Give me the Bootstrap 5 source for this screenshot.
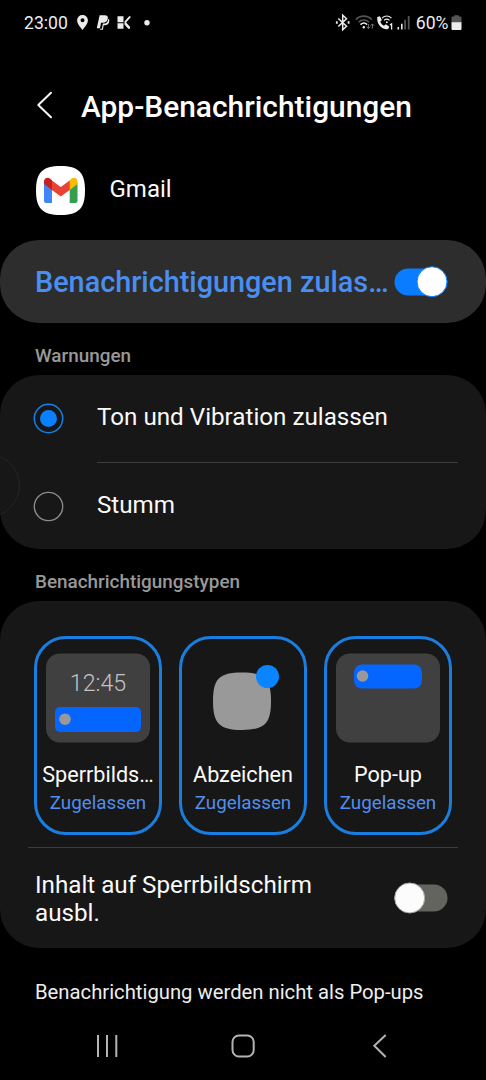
<!DOCTYPE html>
<html lang="de" data-bs-theme="dark">
<head>
<meta charset="utf-8">
<meta name="viewport" content="width=device-width, initial-scale=1">
<title>App-Benachrichtigungen</title>
<link href="https://cdn.jsdelivr.net/npm/bootstrap@5.3.0/dist/css/bootstrap.min.css" rel="stylesheet">
<style>
body{background:#000;color:#fafafa;font-family:Roboto,"Noto Sans",sans-serif;line-height:1.17;height:1080px;overflow:hidden}
svg{display:block;flex:none}
.statusbar{height:46px;padding:0 24px;font-size:17.6px;color:#ececec}
.status-icons{margin-right:3.5px}
.battery{margin-left:2.5px}
.page-head{height:120px;padding:0 36px}
.page-head h1{font-size:29.9px;font-weight:500;margin-left:27px;padding-top:2px}
.app-row{height:74px;padding:0 36px;font-size:24px}
.app-name{margin:9px 0 0 24.5px}
.panel{background:#171717;border-radius:39px}
.master{background:#2d2d2d;height:83px;padding:0 38px 0 35px}
.master-label{color:#4a8ff0;font-size:28.8px;font-weight:500;width:355px;padding-top:3px}
.section-label{height:52px;padding:22px 35px 0;font-size:18.9px;font-weight:500;color:#999}
.alerts{height:174px}
.option{font-size:24.2px;padding-left:33px;height:87px}
.option-text{margin-left:33px;padding-bottom:2px}
.rule{height:1px;background:#3d3d3d;margin-right:28px}
.option-rule{margin-left:97px}
.types-rule{margin-left:28px;margin-top:12px}
.tiles{padding:35px 34px 0;gap:17px}
.tile{width:128px;height:199px;border:3px solid #1a7ee0;border-radius:32px;padding-top:13.5px}
.tile-name{font-size:21.6px;margin-top:19.5px;width:114px}
.tile-state{font-size:18.8px;color:#528eec;margin-top:5px}
.hide-row{font-size:24.2px;height:100px;padding:0 38px 0 35px;line-height:28.5px}
.hide-text{padding-top:2px}
.note{font-size:20.25px;padding:33px 35px 0;height:64px;color:#eee}
.navkeys{height:68px}
.edge-handle{left:-43px;top:454px;width:63px;height:63px;border:1px solid #252525;border-radius:50%}
</style>
</head>
<body>
<header class="statusbar d-flex align-items-center justify-content-between">
  <div class="d-flex align-items-center">
    <span class="clock">23:00</span>
    <svg class="ms-2" width="78" height="20" viewBox="76 13 78 20" fill="#ececec">
      <path fill-rule="evenodd" d="M82.500 15a5.200 5.200 0 0 0-5.400 5.200c0 3.600 3.400 7 5.400 9.800 2-2.800 5.400-6.200 5.400-9.800A5.200 5.200 0 0 0 82.500 15zm0 3.200a2 2 0 1 1 0 4 2 2 0 0 1 0-4z"/>
      <path d="M99.600 15.300h5.200c2.700 0 3.500 1.600 2.900 3.700-.6 2.600-2.300 3.700-4.800 3.700h-1.900l-1 5.600h-3.200z"/>
      <path d="M108.400 18.600c1 .8 1.100 2 .7 3.300-.6 2.300-2.200 3.300-4.400 3.300h-1l-.8 4.600h-2.900l.2-1h1.700l1-5.200h1.400c2.300 0 3.700-1.600 4.100-5z"/>
      <path d="M117.500 16.300h6v5.900h-6zM117.500 23.200h6v5.600h-6zM124.500 22.200v-.8l4.600-5.100h1.400v1.200l-4.400 5 3.900 4.300v2h-1.800l-3.700-4.300z"/>
      <circle cx="147" cy="22.700" r="2.700"/>
    </svg>
  </div>
  <div class="d-flex align-items-center">
    <svg class="status-icons" width="78" height="22" viewBox="334 12 78 22" fill="none" stroke="#ececec">
      <path stroke-width="1.500" d="M338.300 18.500l8.200 7.800-3.800 3.500V15.200l3.800 3.500-8.200 7.800"/>
      <path d="M336.800 21.300v2.400M348.600 21.300v2.400" stroke-width="1.800"/>
      <g stroke-width="1.600"><path stroke="#555" d="M355.800 19.600c4.500-4.700 11.500-4.700 16 0M358.500 22.300c3-3 7.600-3 10.600 0"/><path d="M360.500 24.600c2.100-1.900 4.700-1.900 6.600 0"/></g>
      <circle cx="363.800" cy="27.200" r="1.200" fill="#ececec" stroke="none"/>
      <path stroke="#777" stroke-width="1" d="M368.400 24v4.500m-1.700-1.700l1.700 1.800 1.700-1.800M372.400 28.500V24m-1.700 1.700l1.700-1.800 1.700 1.800"/>
      <path fill="#ececec" stroke="none" d="M377.300 17l2.600-.8 2 3.900-1.600 1.700c.8 1.900 2 3.200 3.700 4l1.800-1.500 3.400 2.100c-.3 2-1.300 3-3.200 2.900-5.200-.5-9.600-6.300-8.700-12.300z"/>
      <path stroke-width="1.100" d="M382 18.100c2.800-2.900 6.700-2.900 9.500 0M384 20.400c1.700-1.600 3.800-1.600 5.500 0"/>
      <circle cx="386.800" cy="22.300" r="1" fill="#ececec" stroke="none"/>
      <path stroke-width="1.300" d="M390 24.900l1.600-1v5.500"/>
      <path stroke-width="1.600" d="M398.300 27v2.500M401.800 23.700v5.800"/><path stroke="#555" stroke-width="1.800" d="M405.100 19.800v9.700M408.700 16v13.500"/>
    </svg>
    <span class="battery-text">60%</span>
    <svg class="battery" width="11" height="16" viewBox="0 0 11 16"><path d="M3 1.500C3 .7 3.300.3 4 .3h3c.7 0 1 .4 1 1.200h1.200c.8 0 1.300.5 1.300 1.300V8H.5V2.800c0-.8.5-1.300 1.300-1.300z" fill="#555"/><path d="M.5 7.300h10v6.400c0 .8-.5 1.300-1.300 1.300H1.800c-.8 0-1.300-.5-1.300-1.300z" fill="#ececec"/></svg>
  </div>
</header>

<div class="page-head d-flex align-items-center">
  <svg width="18" height="30" viewBox="36 91 18 30"><path d="M51 92.800L38.300 105 51 117.300" fill="none" stroke="#f5f5f5" stroke-width="2" stroke-linecap="round" stroke-linejoin="round"/></svg>
  <h1 class="mb-0 text-nowrap">App-Benachrichtigungen</h1>
</div>

<div class="app-row d-flex align-items-start">
  <svg width="49" height="49" viewBox="0 0 49 49">
    <path d="M24.500 0C42.500 0 49 6.500 49 24.500S42.500 49 24.500 49 0 42.500 0 24.500 6.500 0 24.500 0z" fill="#fff"/>
    <path d="M8 17l8 6v14h-6a2 2 0 0 1-2-2z" fill="#4285f4"/>
    <path d="M41.500 17l-7.800 6v14h5.800a2 2 0 0 0 2-2z" fill="#34a04f"/>
    <path d="M15.500 14.300l9.300 6.700 9.200-6.700v9.400l-9.200 6.800-9.300-6.800z" fill="#ea4335"/>
    <path d="M8 18v-2.500c0-3.300 3.200-4.800 6-3l2 1.800v9.800z" fill="#c5221f"/>
    <path d="M41.500 18v-2.500c0-3.300-3.200-4.800-6-3l-1.800 1.800v9.800z" fill="#fbbc04"/>
  </svg>
  <span class="app-name">Gmail</span>
</div>

<main>
  <section class="panel master d-flex align-items-center justify-content-between">
    <span class="master-label text-nowrap">Benachrichtigungen zulas…</span>
    <svg width="54" height="32" viewBox="0 0 54 32"><rect x=".5" y="2.500" width="53" height="27" rx="13.500" fill="#0a7cff"/><circle cx="38" cy="15.700" r="15" fill="#fff" stroke="#0a7cff"/></svg>
  </section>

  <h2 class="section-label mb-0">Warnungen</h2>
  <section class="panel alerts">
    <div class="option d-flex align-items-center">
      <svg width="31" height="31"><circle cx="15.500" cy="15.500" r="14.200" fill="none" stroke="#187fe8" stroke-width="1.500"/><circle cx="15.500" cy="15.500" r="8.500" fill="#0a7fff"/></svg>
      <span class="option-text">Ton und Vibration zulassen</span>
    </div>
    <div class="rule option-rule"></div>
    <div class="option d-flex align-items-center">
      <svg width="31" height="31"><circle cx="15.500" cy="15.500" r="14.200" fill="none" stroke="#8c8c8c" stroke-width="1.300"/></svg>
      <span class="option-text">Stumm</span>
    </div>
  </section>

  <h2 class="section-label mb-0">Benachrichtigungstypen</h2>
  <section class="panel types">
    <div class="tiles d-flex">
      <div class="tile d-flex flex-column align-items-center">
        <svg width="104" height="90" viewBox="0 0 104 90"><rect x="0" y=".5" width="104" height="89" rx="14" fill="#404040"/><text x="52" y="38" text-anchor="middle" font-size="23.200" font-weight="300" fill="#c4c4c4">12:45</text><rect x="9" y="54" width="86" height="25" rx="5" fill="#0566ff"/><circle cx="19" cy="66.200" r="5.800" fill="#999"/></svg>
        <span class="tile-name text-nowrap text-center">Sperrbilds…</span>
        <span class="tile-state">Zugelassen</span>
      </div>
      <div class="tile d-flex flex-column align-items-center">
        <svg width="104" height="90" viewBox="0 0 104 90"><path d="M51 19.500C74 19.500 80 26 80 48S74 77 51 77 22 70 22 48 28 19.500 51 19.500z" fill="#999"/><circle cx="76.500" cy="23.500" r="11.500" fill="#0a84ff"/></svg>
        <span class="tile-name text-nowrap text-center">Abzeichen</span>
        <span class="tile-state">Zugelassen</span>
      </div>
      <div class="tile d-flex flex-column align-items-center">
        <svg width="104" height="90" viewBox="0 0 104 90"><rect x="0" y=".5" width="104" height="89" rx="14" fill="#404040"/><rect x="18" y="11.500" width="68" height="24" rx="8" fill="#0566ff"/><circle cx="26.500" cy="23" r="5.800" fill="#999"/></svg>
        <span class="tile-name text-nowrap text-center">Pop-up</span>
        <span class="tile-state">Zugelassen</span>
      </div>
    </div>
    <div class="rule types-rule"></div>
    <div class="hide-row d-flex align-items-center justify-content-between">
      <span class="hide-text">Inhalt auf Sperrbildschirm<br>ausbl.</span>
      <svg width="54" height="32" viewBox="0 0 54 32"><rect x=".5" y="2.500" width="53" height="27" rx="13.500" fill="#64645e"/><circle cx="15.700" cy="16" r="15" fill="#fcfcfc" stroke="#aaa"/></svg>
    </div>
  </section>
  <p class="note mb-0 text-nowrap">Benachrichtigung werden nicht als Pop-ups</p>
</main>

<nav class="navkeys d-flex align-items-center justify-content-center">
  <svg width="486" height="68" viewBox="0 1012 486 68" fill="none" stroke="#b4b4b4" stroke-width="2"><path d="M98 1035v22M107 1035v22M116.300 1035v22"/><rect x="232.500" y="1035.500" width="21.200" height="21" rx="6.500"/><path d="M385.700 1035L374.300 1045.800 385.700 1057"/></svg>
</nav>
<div class="edge-handle position-absolute"></div>
<script src="https://cdn.jsdelivr.net/npm/bootstrap@5.3.0/dist/js/bootstrap.bundle.min.js"></script>
</body>
</html>
